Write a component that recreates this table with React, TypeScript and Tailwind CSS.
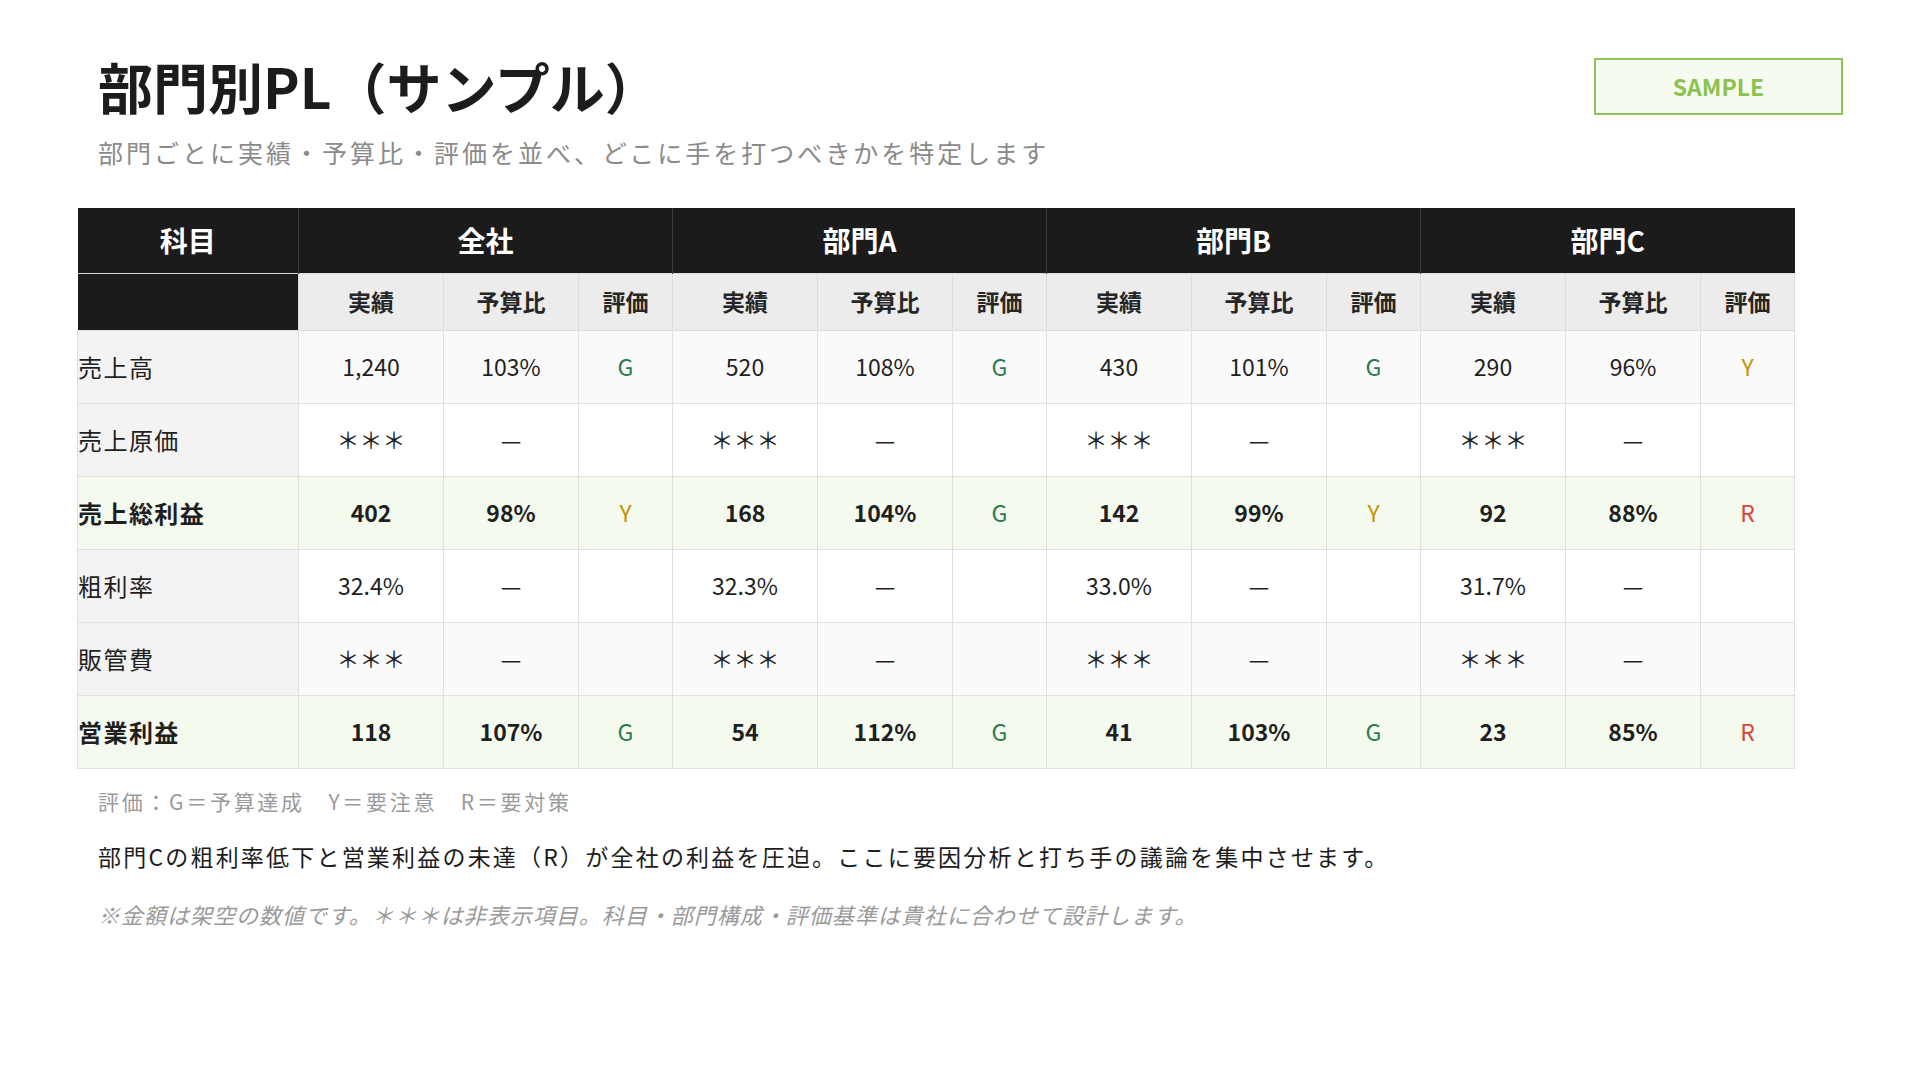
import React from "react";

type Eval = "G" | "Y" | "R" | "";
type Cell = { v: string; p: string; e: Eval };
type Row = { label: string; kind: "gray" | "white" | "green"; labelBg: "gray" | "green"; bold: boolean; cells: Cell[] };

const rows: Row[] = [
  {
    label: "売上高",
    kind: "gray",
    labelBg: "gray",
    bold: false,
    cells: [
      { v: "1,240", p: "103%", e: "G" },
      { v: "520", p: "108%", e: "G" },
      { v: "430", p: "101%", e: "G" },
      { v: "290", p: "96%", e: "Y" },
    ],
  },
  {
    label: "売上原価",
    kind: "white",
    labelBg: "gray",
    bold: false,
    cells: [
      { v: "＊＊＊", p: "—", e: "" },
      { v: "＊＊＊", p: "—", e: "" },
      { v: "＊＊＊", p: "—", e: "" },
      { v: "＊＊＊", p: "—", e: "" },
    ],
  },
  {
    label: "売上総利益",
    kind: "green",
    labelBg: "green",
    bold: true,
    cells: [
      { v: "402", p: "98%", e: "Y" },
      { v: "168", p: "104%", e: "G" },
      { v: "142", p: "99%", e: "Y" },
      { v: "92", p: "88%", e: "R" },
    ],
  },
  {
    label: "粗利率",
    kind: "white",
    labelBg: "gray",
    bold: false,
    cells: [
      { v: "32.4%", p: "—", e: "" },
      { v: "32.3%", p: "—", e: "" },
      { v: "33.0%", p: "—", e: "" },
      { v: "31.7%", p: "—", e: "" },
    ],
  },
  {
    label: "販管費",
    kind: "gray",
    labelBg: "gray",
    bold: false,
    cells: [
      { v: "＊＊＊", p: "—", e: "" },
      { v: "＊＊＊", p: "—", e: "" },
      { v: "＊＊＊", p: "—", e: "" },
      { v: "＊＊＊", p: "—", e: "" },
    ],
  },
  {
    label: "営業利益",
    kind: "green",
    labelBg: "green",
    bold: true,
    cells: [
      { v: "118", p: "107%", e: "G" },
      { v: "54", p: "112%", e: "G" },
      { v: "41", p: "103%", e: "G" },
      { v: "23", p: "85%", e: "R" },
    ],
  },
];

const evalColor: Record<string, string> = {
  G: "text-[#2a7a4e]",
  Y: "text-[#c4920a]",
  R: "text-[#d9443a]",
  "": "",
};

const groups = ["全社", "部門A", "部門B", "部門C"];

export default function App() {
  return (
    <div className="w-[1920px] h-[1080px] bg-white font-['Noto_Sans_CJK_JP',sans-serif] text-[#1f1f1f] overflow-hidden">
      <div className="flex justify-between items-start pl-[98px] pr-[77px] pt-[53px]">
        <div>
          <h1 className="text-[55px] font-bold leading-[64px] text-[#1c1c1c]">部門別PL（サンプル）</h1>
          <p className="mt-[19px] text-[25px] leading-[32px] tracking-[3px] text-[#8a8a8a]">
            部門ごとに実績・予算比・評価を並べ、どこに手を打つべきかを特定します
          </p>
        </div>
        <div className="mt-[5px] w-[249px] h-[57px] border-2 border-[#8dc656] bg-[#f6fbef] flex items-center justify-center text-[23px] font-bold text-[#8cc152]">
          SAMPLE
        </div>
      </div>

      <div className="pl-[77px] mt-[40px]">
        <table className="table-fixed border-collapse w-[1717px]">
          <colgroup>
            <col className="w-[221px]" />
            {groups.map((g) => (
              <React.Fragment key={g}>
                <col className="w-[145px]" />
                <col className="w-[135px]" />
                <col className="w-[94px]" />
              </React.Fragment>
            ))}
          </colgroup>
          <thead>
            <tr className="h-[65px] bg-[#1b1b1b] text-white">
              <th className="text-[28px] font-bold border-r border-[#3a3a3a]">科目</th>
              {groups.map((g) => (
                <th key={g} colSpan={3} className="text-[28px] font-bold border-l border-[#3a3a3a]">
                  {g}
                </th>
              ))}
            </tr>
            <tr className="h-[57px]">
              <th className="bg-[#1b1b1b] border-t border-[#d8d8d8]"></th>
              {groups.map((g) => (
                <React.Fragment key={g}>
                  <th className="bg-[#ececec] border border-[#dcdcdc] text-[23px] font-bold text-[#262626]">実績</th>
                  <th className="bg-[#ececec] border border-[#dcdcdc] text-[23px] font-bold text-[#262626]">予算比</th>
                  <th className="bg-[#ececec] border border-[#dcdcdc] text-[23px] font-bold text-[#262626]">評価</th>
                </React.Fragment>
              ))}
            </tr>
          </thead>
          <tbody>
            {rows.map((r) => {
              const bg =
                r.kind === "green" ? "bg-[#f5faef]" : r.kind === "gray" ? "bg-[#fafafa]" : "bg-white";
              const labelBg = r.labelBg === "green" ? "bg-[#f5faef]" : "bg-[#f3f3f3]";
              const weight = r.bold ? "font-bold" : "font-normal";
              return (
                <tr key={r.label} className="h-[73px]">
                  <td className={`${labelBg} ${weight} border border-[#e0e0e0] text-[24px] text-left pl-0 tracking-[0.06em]`}>
                    {r.label}
                  </td>
                  {r.cells.map((c, i) => (
                    <React.Fragment key={i}>
                      <td className={`${bg} ${weight} border border-[#e0e0e0] text-[23px] text-center`}>{c.v}</td>
                      <td className={`${bg} ${weight} border border-[#e0e0e0] text-[23px] text-center`}>{c.p}</td>
                      <td className={`${bg} border border-[#e0e0e0] text-[23px] text-center font-normal ${evalColor[c.e]}`}>
                        {c.e}
                      </td>
                    </React.Fragment>
                  ))}
                </tr>
              );
            })}
          </tbody>
        </table>
      </div>

      <div className="pl-[98px]">
        <p className="mt-[17px] text-[21px] leading-[30px] tracking-[2.7px] text-[#9a9a9a]">
          評価：G＝予算達成　Y＝要注意　R＝要対策
        </p>
        <p className="mt-[24px] text-[23px] leading-[32px] tracking-[2.2px] text-[#1c1c1c]">
          部門Cの粗利率低下と営業利益の未達（R）が全社の利益を圧迫。ここに要因分析と打ち手の議論を集中させます。
        </p>
        <p className="mt-[27px] text-[22px] leading-[30px] tracking-[1px] italic text-[#9a9a9a]">
          ※金額は架空の数値です。＊＊＊は非表示項目。科目・部門構成・評価基準は貴社に合わせて設計します。
        </p>
      </div>
    </div>
  );
}
